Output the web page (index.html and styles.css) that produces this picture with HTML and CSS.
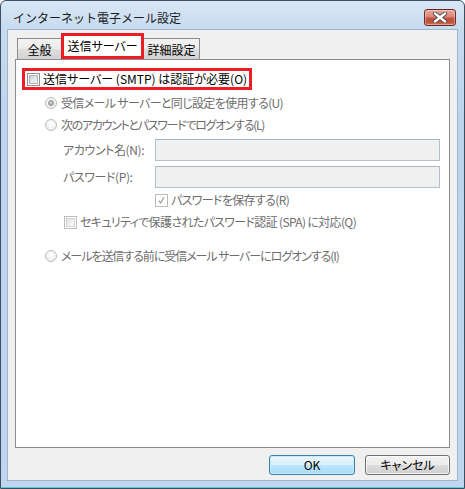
FILE: index.html
```html
<!DOCTYPE html>
<html lang="ja">
<head>
<meta charset="utf-8">
<title>インターネット電子メール設定</title>
<link rel="stylesheet" href="styles.css">
</head>
<body>
<div class="window">
  <div class="titlebar">
    <span class="title">インターネット電子メール設定</span>
    <div class="close">
      <svg width="16" height="11" viewBox="0 0 16 11">
        <path d="M3 1.5 L13 9.5 M13 1.5 L3 9.5" stroke="#4a4a4a" stroke-width="4.2" stroke-linecap="round" fill="none"/>
        <path d="M3 1.5 L13 9.5 M13 1.5 L3 9.5" stroke="#ffffff" stroke-width="2.4" stroke-linecap="round" fill="none"/>
      </svg>
    </div>
  </div>
  <div class="client">
    <div class="tabs">
      <div class="tab tab-general">全般</div>
      <div class="tab tab-active">送信サーバー</div>
      <div class="tab tab-detail">詳細設定</div>
    </div>
    <div class="panel">
      <div class="highlight">
        <span class="cb cb-enabled"><span class="cb-inner"></span></span>
        <span class="label-enabled">送信サーバー (SMTP) は認証が必要(O)</span>
      </div>
      <div class="row radio-row first">
        <span class="radio"><span class="dot"></span></span>
        <span class="txt tight">受信メール サーバーと同じ設定を使用する(U)</span>
      </div>
      <div class="row radio-row second">
        <span class="radio"></span>
        <span class="txt tightest">次のアカウントとパスワードでログオンする(L)</span>
      </div>
      <div class="field first-field">
        <span class="flabel">アカウント名(N):</span>
        <span class="input"></span>
      </div>
      <div class="field second-field">
        <span class="flabel">パスワード(P):</span>
        <span class="input"></span>
      </div>
      <div class="row save-row">
        <span class="cb cb-disabled"><svg width="11" height="11" viewBox="0 0 11 11"><path d="M2.2 5.6 L4.3 8.3 L8.6 1.8" stroke="#a3a3a3" stroke-width="1.6" fill="none"/></svg></span>
        <span class="txt tight">パスワードを保存する(R)</span>
      </div>
      <div class="row spa-row">
        <span class="cb cb-disabled"><span class="cb-inner dis"></span></span>
        <span class="txt tight">セキュリティで保護されたパスワード認証 (SPA) に対応(Q)</span>
      </div>
      <div class="row radio-row third">
        <span class="radio"></span>
        <span class="txt tighter">メールを送信する前に受信メール サーバーにログオンする(I)</span>
      </div>
    </div>
    <div class="buttons">
      <div class="btn btn-default">OK</div>
      <div class="btn">キャンセル</div>
    </div>
  </div>
</div>
</body>
</html>
```

FILE: styles.css
```css
* { box-sizing: border-box; }
html, body {
  margin: 0;
  padding: 0;
  background: #ffffff;
}
body {
  font-family: "Noto Sans CJK JP", "Noto Sans", sans-serif;
  font-size: 12px;
  font-feature-settings: "palt";
  color: #000;
}
.window {
  width: 465px;
  height: 489px;
  border: 1px solid #3b4f63;
  border-radius: 6px 6px 0 0;
  background: linear-gradient(180deg, #d9e7f5 0px, #c7dbef 28px, #bdd4eb 120px, #bfd6ec 100%);
  box-shadow: inset 0 -1px 0 #5fc6de;
  padding: 0 6px 7px;
  display: flex;
  flex-direction: column;
}
.titlebar {
  height: 28px;
  display: flex;
  align-items: flex-start;
  justify-content: space-between;
}
.title {
  margin-top: 7px;
  padding-left: 6px;
  line-height: 20px;
  font-size: 12px;
  font-feature-settings: normal;
  letter-spacing: 0;
  color: #1a1a1a;
}
.close {
  margin-top: 8px;
  margin-right: 2px;
  width: 32px;
  height: 17px;
  border: 1px solid #6b2a24;
  border-radius: 3px;
  background: linear-gradient(180deg, #e7a99e 0%, #d88677 45%, #c4513f 55%, #c0503e 80%, #d2735f 100%);
  box-shadow: inset 0 0 0 1px rgba(255, 220, 210, 0.45);
  display: flex;
  align-items: center;
  justify-content: center;
}
.client {
  flex: 1;
  border: 1px solid #9db5cd;
  background: #f0f0f0;
  display: flex;
  flex-direction: column;
}
.tabs {
  margin-top: 3px;
  padding-left: 9px;
  height: 26px;
  display: flex;
  align-items: flex-end;
}
.tab {
  height: 21px;
  border: 1px solid #898c95;
  border-bottom: none;
  background: linear-gradient(180deg, #f3f3f3 0%, #ebebeb 50%, #dedede 51%, #d2d2d2 100%);
  display: flex;
  align-items: center;
  justify-content: center;
  padding-top: 1px;
  margin-bottom: 0;
}
.tab-general {
  width: 44px;
  border-right: none;
}
.tab-active {
  width: 83px;
  height: 26px;
  background: #ffffff;
  border: 3px solid #ee1c25;
  padding-top: 0;
  padding-bottom: 1px;
  position: relative;
  z-index: 1;
}
.tab-detail {
  width: 56px;
  border-left: none;
}
.panel {
  height: 389px;
  margin: 0 7px;
  border: 1px solid #898c95;
  background: #ffffff;
  padding: 8px 0 0 0;
  color: #6d6d6d;
}
.highlight {
  display: inline-flex;
  align-items: center;
  height: 22px;
  margin-left: 6px;
  border: 3px solid #ee1c25;
  padding: 0 2px;
  gap: 3px;
  color: #000;
}
.label-enabled {
  line-height: 16px;
  color: #000;
}
.tight { letter-spacing: -0.65px; }
.tighter { letter-spacing: -1.05px; }
.tightest { letter-spacing: -1.3px; }
.cb {
  width: 13px;
  height: 13px;
  flex: none;
  display: flex;
  align-items: center;
  justify-content: center;
  background: #ffffff;
}
.cb-enabled {
  border: 1px solid #8e8f8f;
  padding: 1px;
}
.cb-disabled {
  border: 1px solid #bcbcbc;
  padding: 1px;
}
.cb-inner {
  width: 9px;
  height: 9px;
  border: 1px solid #aeb3b9;
  background: linear-gradient(135deg, #cbcfd5 0%, #e4e6e8 50%, #f7f7f7 100%);
}
.cb-inner.dis {
  border-color: #d2d2d2;
  background: linear-gradient(135deg, #e2e2e2 0%, #f0f0f0 50%, #fbfbfb 100%);
}
.row {
  display: flex;
  align-items: center;
  height: 16px;
  line-height: 16px;
  white-space: nowrap;
}
.radio-row {
  margin-left: 29px;
  gap: 4px;
}
.radio-row.first { margin-top: 5px; }
.radio-row.second { margin-top: 6px; }
.radio-row.third { margin-top: 18px; }
.radio {
  width: 12px;
  height: 12px;
  flex: none;
  border-radius: 50%;
  border: 1px solid #bdbdbd;
  background: radial-gradient(circle at 50% 40%, #ffffff 0%, #f1f1f1 60%, #e4e4e4 100%);
  display: flex;
  align-items: center;
  justify-content: center;
}
.dot {
  width: 6px;
  height: 6px;
  border-radius: 50%;
  border: 1px solid #8f8f8f;
  background: radial-gradient(circle at 40% 35%, #d6d6d6 0%, #a9a9a9 70%, #8c8c8c 100%);
}
.field {
  display: flex;
  align-items: center;
  margin-left: 47px;
  height: 22px;
}
.first-field { margin-top: 6px; }
.second-field { margin-top: 5px; }
.flabel {
  width: 92px;
  flex: none;
  line-height: 16px;
  white-space: nowrap;
  letter-spacing: -0.4px;
}
.input {
  width: 285px;
  height: 22px;
  border: 1px solid #b4c0cc;
  border-top-color: #a9b5c1;
  background: #f0f0f0;
}
.save-row {
  margin-top: 4px;
  margin-left: 139px;
  gap: 3px;
}
.spa-row {
  margin-top: 6px;
  margin-left: 48px;
  gap: 3px;
}
.buttons {
  margin-top: 7px;
  margin-right: 7px;
  height: 20px;
  display: flex;
  justify-content: flex-end;
  gap: 10px;
}
.btn {
  width: 85px;
  height: 20px;
  border: 1px solid #707070;
  border-radius: 3px;
  background: linear-gradient(180deg, #f2f2f2 0%, #ebebeb 50%, #dddddd 51%, #cfcfcf 100%);
  box-shadow: inset 0 0 0 1px rgba(255, 255, 255, 0.7);
  display: flex;
  align-items: center;
  justify-content: center;
  line-height: 16px;
  color: #000;
}
.btn-default {
  width: 86px;
  border-color: #3c7fb1;
  background: linear-gradient(180deg, #eaf6fd 0%, #d9f0fc 50%, #bee6fd 51%, #a7d9f5 100%);
  box-shadow: inset 0 0 0 1px #c8ecfd;
}
```
